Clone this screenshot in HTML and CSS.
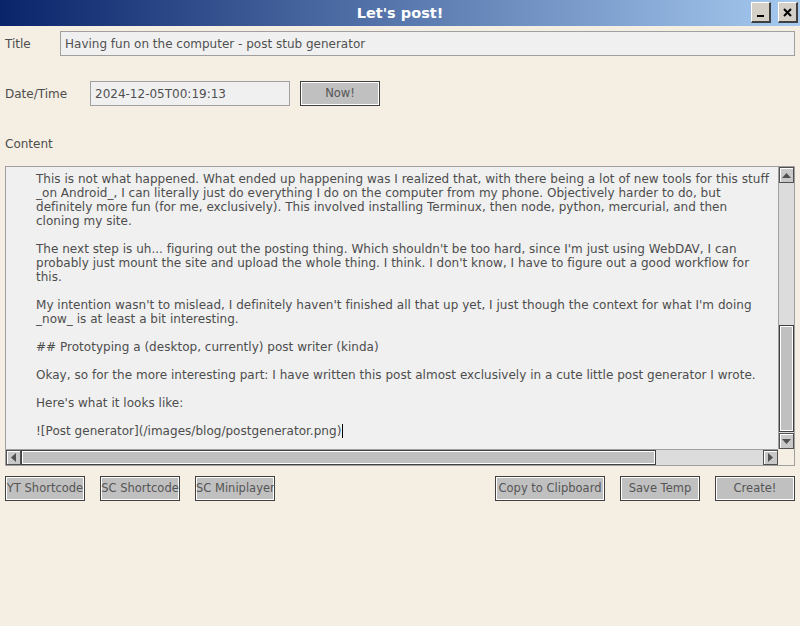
FILE: index.html
```html
<!DOCTYPE html>
<html>
<head>
<meta charset="utf-8">
<link rel="stylesheet" href="styles.css">
</head>
<body>
<div class="window">
  <div class="titlebar">
    <div class="spacer"></div>
    <div class="title">Let's post!</div>
    <div class="controls">
      <div class="wbtn"><span class="min"></span></div>
      <div class="wbtn"><svg width="9" height="9" viewBox="0 0 9 9"><path d="M1 1L8 8M8 1L1 8" stroke="#000" stroke-width="2"/></svg></div>
    </div>
  </div>
  <div class="form">
    <div class="row row-title">
      <div class="label lbl-title">Title</div>
      <div class="field grow">Having fun on the computer - post stub generator</div>
    </div>
    <div class="row row-date">
      <div class="label lbl-date">Date/Time</div>
      <div class="field date">2024-12-05T00:19:13</div>
      <div class="btn now">Now!</div>
    </div>
    <div class="label lbl-content">Content</div>
    <div class="textbox">
      <div class="viewport">
        <div class="text">This is not what happened. What ended up happening was I realized that, with there being a lot of new tools for this stuff
_on Android_, I can literally just do everything I do on the computer from my phone. Objectively harder to do, but
definitely more fun (for me, exclusively). This involved installing Terminux, then node, python, mercurial, and then
cloning my site.

The next step is uh... figuring out the posting thing. Which shouldn't be too hard, since I'm just using WebDAV, I can
probably just mount the site and upload the whole thing. I think. I don't know, I have to figure out a good workflow for
this.

My intention wasn't to mislead, I definitely haven't finished all that up yet, I just though the context for what I'm doing
_now_ is at least a bit interesting.

## Prototyping a (desktop, currently) post writer (kinda)

Okay, so for the more interesting part: I have written this post almost exclusively in a cute little post generator I wrote.

Here's what it looks like:

![Post generator](/images/blog/postgenerator.png)<span class="caret"></span></div>
      </div>
      <div class="vscroll">
        <div class="arrow"><svg width="9" height="5" viewBox="0 0 9 5"><path d="M0 5L4.5 0L9 5Z" fill="#505050"/></svg></div>
        <div class="vtrack">
          <div class="vthumb"></div>
        </div>
        <div class="arrow"><svg width="9" height="5" viewBox="0 0 9 5"><path d="M0 0L4.5 5L9 0Z" fill="#505050"/></svg></div>
      </div>
      <div class="hscroll">
        <div class="arrow harrow"><svg width="5" height="9" viewBox="0 0 5 9"><path d="M5 0L0 4.5L5 9Z" fill="#505050"/></svg></div>
        <div class="htrack">
          <div class="hthumb"></div>
        </div>
        <div class="arrow harrow"><svg width="5" height="9" viewBox="0 0 5 9"><path d="M0 0L5 4.5L0 9Z" fill="#505050"/></svg></div>
      </div>
      <div class="corner"></div>
    </div>
    <div class="buttons">
      <div class="btn b80">YT Shortcode</div>
      <div class="btn b80">SC Shortcode</div>
      <div class="btn b80">SC Miniplayer</div>
      <div class="fill"></div>
      <div class="btn b110">Copy to Clipboard</div>
      <div class="btn b80">Save Temp</div>
      <div class="btn b80">Create!</div>
    </div>
  </div>
</div>
</body>
</html>
```
FILE: styles.css
```css
html, body {
  margin: 0;
  padding: 0;
}
body {
  background: #f5eee3;
  font-family: "DejaVu Sans", sans-serif;
  font-size: 12px;
  color: #4d4d4d;
  width: 800px;
  height: 626px;
  overflow: hidden;
}
.window {
  width: 800px;
  height: 626px;
  display: flex;
  flex-direction: column;
}
.titlebar {
  height: 26px;
  flex: none;
  display: grid;
  grid-template-columns: 1fr auto 1fr;
  align-items: center;
  background: linear-gradient(to right, #0a246a 0%, #a6caf0 100%);
}
.title {
  color: #fff;
  font-weight: bold;
  font-size: 14.5px;
  line-height: 26px;
}
.controls {
  display: flex;
  justify-content: flex-end;
  gap: 7px;
  padding-right: 2px;
  align-self: start;
  padding-top: 2px;
}
.wbtn {
  width: 17px;
  height: 18px;
  background: #d4d0c8;
  border-top: 1px solid #fff;
  border-left: 1px solid #fff;
  border-right: 2px solid #404040;
  border-bottom: 2px solid #404040;
  display: flex;
  align-items: center;
  justify-content: center;
}
.min {
  width: 7px;
  height: 2px;
  background: #000;
  margin-top: 7px;
}
.form {
  padding: 5px 5px 0 5px;
  display: flex;
  flex-direction: column;
}
.row {
  display: flex;
  align-items: center;
}
.label {
  color: #4d4d4d;
  font-size: 12px;
}
.lbl-title {
  width: 55px;
  flex: none;
}
.lbl-date {
  width: 85px;
  flex: none;
}
.row-date {
  margin-top: 25px;
}
.field {
  height: 23px;
  line-height: 24px;
  background: #f0f0f0;
  border: 1px solid #a0a0a0;
  padding: 0 4px;
  font-size: 12px;
  color: #505050;
  box-sizing: content-box;
}
.grow {
  flex: 1;
}
.date {
  width: 190px;
}
.btn {
  height: 23px;
  line-height: 23px;
  background: #c0c0c0;
  border: 1px solid #404040;
  box-shadow: inset 1px 1px 0 #fff, inset -1px -1px 0 #fff;
  text-align: center;
  font-size: 11.5px;
  color: #555;
  box-sizing: content-box;
  white-space: nowrap;
}
.now {
  width: 78px;
  margin-left: 10px;
}
.lbl-content {
  margin-top: 31px;
  height: 14px;
  line-height: 14px;
}
.textbox {
  margin-top: 15px;
  height: 298px;
  border: 1px solid #a0a0a0;
  background: #f0f0f0;
  display: grid;
  grid-template-columns: 1fr 16px;
  grid-template-rows: 1fr 16px;
}
.viewport {
  overflow: hidden;
}
.text {
  white-space: pre;
  padding: 5px 0 0 30px;
  line-height: 14px;
  font-size: 12px;
  letter-spacing: 0.025px;
  color: #4d4d4d;
}
.caret {
  display: inline-block;
  width: 1px;
  height: 14px;
  background: #000;
  vertical-align: top;
  margin-left: 1px;
}
.vscroll {
  display: flex;
  flex-direction: column;
  background: #dcdcdc;
  border-left: 1px solid #a0a0a0;
}
.arrow {
  height: 16px;
  flex: none;
  background: #c8c8c8;
  border: 1px solid #505050;
  box-shadow: inset 1px 1px 0 #fff;
  display: flex;
  align-items: center;
  justify-content: center;
  box-sizing: border-box;
}
.vtrack {
  flex: 1;
  display: flex;
  flex-direction: column;
  justify-content: flex-end;
  padding-bottom: 1px;
}
.vthumb {
  height: 107px;
  background: #c0c0c0;
  border: 1px solid #404040;
  box-shadow: inset 1px 1px 0 #fff, inset -1px -1px 0 #fff;
  box-sizing: border-box;
}
.hscroll {
  display: flex;
  background: #dcdcdc;
  border-top: 1px solid #a0a0a0;
}
.harrow {
  width: 15px;
  height: auto;
}
.htrack {
  flex: 1;
  display: flex;
}
.hthumb {
  width: 635px;
  background: #c0c0c0;
  border: 1px solid #404040;
  box-shadow: inset 1px 1px 0 #fff, inset -1px -1px 0 #fff;
  box-sizing: border-box;
}
.corner {
  background: #f5eee3;
}
.buttons {
  margin-top: 10px;
  display: flex;
  gap: 15px;
}
.fill {
  flex: 1;
}
.b80 {
  width: 78px;
}
.b110 {
  width: 108px;
}
```
